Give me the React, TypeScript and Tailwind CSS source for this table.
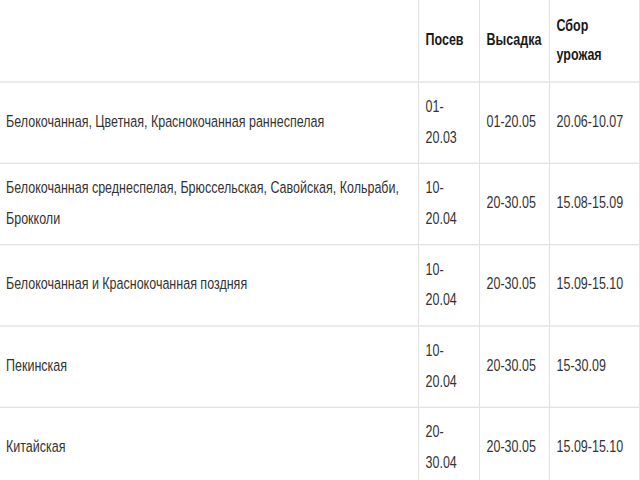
const rows = [
  { name: "Белокочанная, Цветная, Краснокочанная раннеспелая", sow: "01-20.03", plant: "01-20.05", harvest: "20.06-10.07" },
  { name: "Белокочанная среднеспелая, Брюссельская, Савойская, Кольраби, Брокколи", sow: "10-20.04", plant: "20-30.05", harvest: "15.08-15.09" },
  { name: "Белокочанная и Краснокочанная поздняя", sow: "10-20.04", plant: "20-30.05", harvest: "15.09-15.10" },
  { name: "Пекинская", sow: "10-20.04", plant: "20-30.05", harvest: "15-30.09" },
  { name: "Китайская", sow: "20-30.04", plant: "20-30.05", harvest: "15.09-15.10" },
]

export default function App() {
  return (
    <div className="w-[640px] h-[480px] overflow-hidden bg-white">
      {/* the shot is stretched vertically, so the table is scaled to fit */}
      <div className="origin-top scale-y-[1.3333]">
        <table
          className="table-fixed border-collapse w-[639px] text-[12.5px] leading-[22.5px] text-[#333]"
          style={{ fontFamily: '"Liberation Sans", Arial, sans-serif' }}
        >
          <colgroup>
            <col className="w-[418px]" />
            <col className="w-[61px]" />
            <col className="w-[70px]" />
            <col className="w-[90px]" />
          </colgroup>
          <thead>
            <tr className="h-[61px]">
              <th className="border-r border-b border-[#e2e2e2]"></th>
              <th className="border-r border-b border-[#e2e2e2] text-left font-bold text-[#1a1a1a] pl-[7px] pr-[4px] align-middle">Посев</th>
              <th className="border-r border-b border-[#e2e2e2] text-left font-bold text-[#1a1a1a] pl-[7px] pr-[2px] align-middle">Высадка</th>
              <th className="border-r border-b border-[#e2e2e2] text-left font-bold text-[#1a1a1a] pl-[7px] pr-[7px] align-middle">Сбор урожая</th>
            </tr>
          </thead>
          <tbody>
            {rows.map((r) => (
              <tr key={r.name} className="h-[61px]">
                <td className="border-r border-b border-[#e2e2e2] pl-[6px] pr-[6px] align-middle">{r.name}</td>
                <td className="border-r border-b border-[#e2e2e2] pl-[7px] pr-[7px] align-middle">{r.sow}</td>
                <td className="border-r border-b border-[#e2e2e2] pl-[7px] pr-[2px] align-middle">{r.plant}</td>
                <td className="border-r border-b border-[#e2e2e2] pl-[7px] pr-[4px] align-middle">{r.harvest}</td>
              </tr>
            ))}
          </tbody>
        </table>
      </div>
    </div>
  )
}
